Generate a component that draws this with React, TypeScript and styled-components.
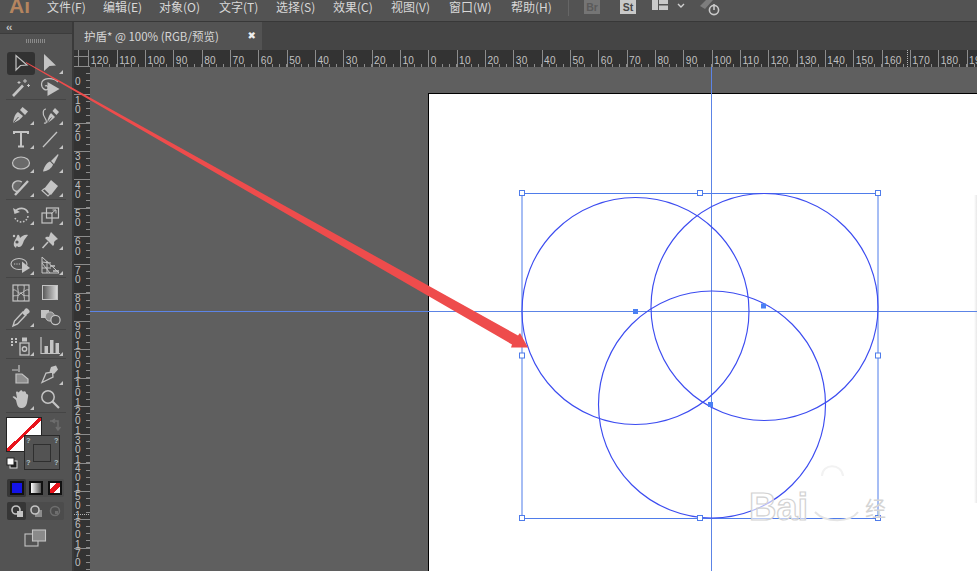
import React from "react";
import styled, { createGlobalStyle } from "styled-components";

const GlobalStyle = createGlobalStyle`
  html, body {
    margin: 0;
    padding: 0;
    width: 100%;
    height: 100%;
    overflow: hidden;
    background: #535353;
  }
`;

const MENUS = [
  { label: "文件(F)", w: 56 },
  { label: "编辑(E)", w: 56 },
  { label: "对象(O)", w: 60 },
  { label: "文字(T)", w: 57 },
  { label: "选择(S)", w: 57 },
  { label: "效果(C)", w: 58 },
  { label: "视图(V)", w: 58 },
  { label: "窗口(W)", w: 62 },
  { label: "帮助(H)", w: 56 },
];

const RULER_UNIT = 28.33;
const H_LABELS = [
  120, 110, 100, 90, 80, 70, 60, 50, 40, 30, 20, 10, 0, 10, 20, 30, 40, 50, 60, 70, 80, 90, 100,
  110, 120, 130, 140, 150, 160, 170, 180, 190,
];
const V_LABELS = [0, 10, 20, 30, 40, 50, 60, 70, 80, 90, 100, 110, 120, 130, 140, 150, 160, 170];

const Page = styled.div`
  position: relative;
  width: 977px;
  height: 571px;
  overflow: hidden;
  display: flex;
  flex-direction: column;
  background: #535353;
  font-family: "Noto Sans CJK SC", "Liberation Sans", sans-serif;
`;

const MenuBar = styled.div`
  height: 21px;
  flex: none;
  display: flex;
  align-items: flex-start;
  background: #535353;
  border-bottom: 1px solid #383838;
`;

const Logo = styled.div`
  width: 47px;
  padding-left: 9px;
  box-sizing: border-box;
  height: 13px;
  overflow: hidden;
  font: bold 21px/12px "Liberation Sans", sans-serif;
  color: #b5855f;
`;

const MenuItem = styled.div<{ $w: number }>`
  width: ${(p) => p.$w}px;
  flex: none;
  font-size: 12px;
  line-height: 13px;
  color: #d8d8d8;
  white-space: nowrap;
`;

const MenuDivider = styled.div`
  width: 1px;
  height: 16px;
  background: #666;
  margin: 0 15px 0 1px;
`;

const AppBadge = styled.div<{ $on?: boolean }>`
  width: 16px;
  height: 14px;
  margin-right: 20px;
  text-align: center;
  font: bold 10.5px/14px "Liberation Sans", sans-serif;
  background: ${(p) => (p.$on ? "#c9c9c9" : "#757575")};
  color: ${(p) => (p.$on ? "#474747" : "#5a5a5a")};
`;

const WorkspaceIcon = styled.svg`
  flex: none;
  display: block;
  margin-left: -4px;
`;

const PowerIcon = styled.svg`
  flex: none;
  display: block;
  margin-left: 12px;
`;

const Body = styled.div`
  flex: 1;
  min-height: 0;
  display: flex;
`;

const ToolPanel = styled.div`
  width: 72px;
  flex: none;
  display: flex;
  flex-direction: column;
  background: #535353;
  border-right: 2px solid #3a3a3a;
`;

const PanelHead = styled.div`
  height: 11px;
  flex: none;
  background: #464646;
  border-bottom: 1px solid #3c3c3c;
  color: #c4c4c4;
  font: bold 11px/10px "Liberation Sans", sans-serif;
  padding-left: 6px;
  letter-spacing: -1px;
`;

const Grip = styled.div`
  width: 20px;
  height: 4px;
  flex: none;
  margin: 5px 0 8px 26px;
  background: repeating-linear-gradient(90deg, #8a8a8a 0 1px, transparent 1px 2px);
`;

const ToolGroup = styled.div`
  margin: 0 6px 2.5px;
  border-bottom: 1px solid #454545;
`;

const ToolRow = styled.div<{ $h: number }>`
  display: flex;
  height: ${(p) => p.$h}px;
  margin-left: 1px;
  align-items: center;
`;

const ToolCell = styled.div<{ $active?: boolean; $more?: boolean }>`
  position: relative;
  width: 28px;
  height: 23px;
  margin-right: 2px;
  display: flex;
  align-items: center;
  justify-content: center;
  border-radius: 3px;
  color: #c4c4c4;
  background: ${(p) => (p.$active ? "#323232" : "transparent")};

  ${(p) =>
    p.$more &&
    `&::after {
      content: "";
      position: absolute;
      right: 1px;
      bottom: 1px;
      border-style: solid;
      border-width: 0 0 4px 4px;
      border-color: transparent transparent #c4c4c4 transparent;
    }`}
`;

const ColorArea = styled.div`
  position: relative;
  height: 57px;
  margin-top: 2px;
  flex: none;
`;

const FillSwatch = styled.div`
  position: absolute;
  left: 6px;
  top: 0;
  width: 34px;
  height: 33px;
  border: 1px solid #222;
  background: linear-gradient(
    to bottom right,
    #fff 0 calc(50% - 1.6px),
    #e8141c calc(50% - 1.6px) calc(50% + 1.6px),
    #fff calc(50% + 1.6px)
  );
`;

const StrokeSwatch = styled.div`
  position: absolute;
  left: 24px;
  top: 18px;
  width: 34px;
  height: 33px;
  border: 1px solid #2a2a2a;
  background: #535353;
  display: flex;
  align-items: center;
  justify-content: center;

  &::after {
    content: "";
    width: 16px;
    height: 16px;
    border: 1px solid #2f2f2f;
  }
`;

const Unknown = styled.span<{ $x: number; $y: number }>`
  position: absolute;
  left: ${(p) => p.$x}px;
  top: ${(p) => p.$y}px;
  font: bold 7.5px/8px "Liberation Sans", sans-serif;
  color: #a9c0c8;
`;

const SwapIcon = styled.svg`
  position: absolute;
  left: 50px;
  top: 1px;
`;

const DefaultIcon = styled.svg`
  position: absolute;
  left: 6px;
  top: 40px;
`;

const ModeRow = styled.div`
  margin: 5px 0 0 7px;
  width: 57px;
  height: 18px;
  flex: none;
  display: flex;
  border-radius: 2px;
  background: #4c4c4c;
  box-sizing: border-box;
`;

const ModeButton = styled.div<{ $active?: boolean }>`
  width: 19px;
  display: flex;
  align-items: center;
  justify-content: center;
  border-radius: 2px;
  background: ${(p) => (p.$active ? "#363636" : "transparent")};
`;

const ColorChip = styled.div<{ $kind: "color" | "gradient" | "none" }>`
  width: 10px;
  height: 10px;
  border: 2px solid #111;
  background: ${(p) =>
    p.$kind === "color"
      ? "#1414e6"
      : p.$kind === "gradient"
        ? "linear-gradient(90deg, #fff, #555)"
        : "linear-gradient(to bottom right, #fff 0 34%, #e8141c 34% 66%, #fff 66%)"};
`;

const ScreenMode = styled.div`
  display: flex;
  justify-content: center;
  margin-top: 9px;
  padding-right: 1px;
  color: #c4c4c4;
`;

const DocArea = styled.div`
  flex: 1;
  min-width: 0;
  display: flex;
  flex-direction: column;
`;

const TabBar = styled.div`
  height: 28px;
  flex: none;
  display: flex;
  background: #454545;
`;

const Tab = styled.div`
  width: 188px;
  box-sizing: border-box;
  display: flex;
  align-items: center;
  justify-content: space-between;
  padding: 0 6px 0 10px;
  background: #535353;
  color: #d6d6d6;
  font-size: 11.5px;
  white-space: nowrap;
`;

const TabClose = styled.span`
  font: bold 10px/12px "Liberation Sans", "DejaVu Sans", sans-serif;
  color: #eee;
`;

const RulerTop = styled.div`
  height: 17px;
  flex: none;
  display: flex;
  background: #333;
  overflow: hidden;
`;

const RulerCorner = styled.div`
  width: 14.33px;
  flex: none;
  box-sizing: border-box;
  background:
    linear-gradient(#8a8a8a, #8a8a8a) 4px 0 / 1px 100% no-repeat,
    linear-gradient(#8a8a8a, #8a8a8a) 0 6px / 100% 1px no-repeat;
`;

const HCell = styled.div`
  width: ${RULER_UNIT}px;
  flex: none;
  box-sizing: border-box;
  border-left: 1px solid #8c8c8c;
  padding: 4px 0 0 1.5px;
  font: 10px/13px "Liberation Sans", sans-serif;
  letter-spacing: 0.35px;
  color: #c2c2c2;
  background: repeating-linear-gradient(90deg, transparent 0 6px, #8c8c8c 6px 7.08px) 0 100% / 100% 3px
    no-repeat;
`;

const Workspace = styled.div`
  flex: 1;
  min-height: 0;
  display: flex;
`;

const RulerLeft = styled.div`
  width: 16px;
  flex: none;
  margin-top: -1px;
  background: #333;
  overflow: hidden;
`;

const VCell = styled.div`
  height: ${RULER_UNIT}px;
  box-sizing: border-box;
  border-top: 1px solid #8c8c8c;
  padding: 0 0 8.5px 1px;
  display: flex;
  flex-direction: column;
  justify-content: flex-end;
  font: 10px/9.3px "Liberation Sans", sans-serif;
  color: #c2c2c2;
  background: repeating-linear-gradient(180deg, transparent 0 6px, #8c8c8c 6px 7.08px) 100% 0 / 4px 100%
    no-repeat;
`;

const Canvas = styled.div`
  flex: 1;
  min-width: 0;
  position: relative;
  background: #5f5f5f;
  overflow: hidden;
`;

const Artboard = styled.div`
  margin: 26px 0 0 338px;
  height: 600px;
  background: #fff;
  border-top: 1.5px solid #000;
  border-left: 1.5px solid #000;
  box-sizing: border-box;
`;

const SidePanelEdge = styled.div`
  position: absolute;
  right: 0;
  bottom: 68px;
  width: 3px;
  height: 308px;
  background: linear-gradient(90deg, #fff, #e8e8e8);
`;

const Overlay = styled.svg`
  position: absolute;
  left: 0;
  top: 0;
  pointer-events: none;
`;

type Tool = { icon: React.ReactNode; more?: boolean; active?: boolean };

const Ico = ({ children }: { children: React.ReactNode }) => (
  <svg width="22" height="22" viewBox="0 0 22 22" fill="none" stroke="currentColor" strokeWidth="1.4">
    {children}
  </svg>
);

const F = "currentColor";
const BG = "#535353";

const groups: { h: number; rows: Tool[][] }[] = [
  {
    h: 24,
    rows: [
      [
        {
          active: true,
          icon: (
            <Ico>
              <path d="M6 3.5 V18 L10.5 13.5 L17 13 Z" strokeWidth="1.2" />
            </Ico>
          ),
        },
        {
          more: true,
          icon: (
            <Ico>
              <path d="M5 2 V19 L10.5 14 L17 13.5 Z" fill={F} stroke="none" />
            </Ico>
          ),
        },
      ],
      [
        {
          icon: (
            <Ico>
              <path d="M3 20 L13 9.5" strokeWidth="2.6" />
              <path d="M15 3 V7 M13 5 H17 M18.5 8 V11 M17 9.5 H20 M9 5 V8 M7.5 6.5 H10.5" strokeWidth="1" />
            </Ico>
          ),
        },
        {
          icon: (
            <Ico>
              <path d="M19 6 C14 1 3 1.5 2.5 8 C2.5 13 7 15 9 13 C10 11 8 9 6 10" strokeWidth="1.2" />
              <path d="M8.5 6 V20 L20.5 13 Z" fill={F} stroke="none" />
            </Ico>
          ),
        },
      ],
    ],
  },
  {
    h: 24,
    rows: [
      [
        {
          more: true,
          icon: (
            <Ico>
              <path d="M3 19 C4 13 5 10 8 8 L13 12 C11 15 8 17 3 19 Z" fill={F} stroke="none" />
              <path d="M10 6 L12.5 3 L18 7.5 L15 11 Z" fill={F} stroke="none" />
              <path d="M3.5 18.5 L8.5 13" stroke={BG} strokeWidth="1" />
            </Ico>
          ),
        },
        {
          more: true,
          icon: (
            <Ico>
              <path d="M5 19 C8 20 8 17 6 14 C3 10 4 5 7 5" strokeWidth="1.2" />
              <path d="M8 19 C9 14 10 11 12 9 L16 13 C14 15 12 17 8 19 Z" fill={F} stroke="none" />
              <path d="M13.5 7 L16 4 L20 8 L17.5 11 Z" fill={F} stroke="none" />
              <path d="M8.5 18.5 L12.5 13.5" stroke={BG} strokeWidth="1" />
            </Ico>
          ),
        },
      ],
      [
        {
          more: true,
          icon: (
            <Ico>
              <path d="M4 6 V4 H18 V6 M11 4 V18 M8 18.5 H14" strokeWidth="2" />
            </Ico>
          ),
        },
        {
          more: true,
          icon: (
            <Ico>
              <path d="M4 19 L18 4" strokeWidth="1.3" />
            </Ico>
          ),
        },
      ],
      [
        {
          more: true,
          icon: (
            <Ico>
              <ellipse cx="11" cy="11" rx="8.5" ry="6" fill="#6a6a6a" strokeWidth="1.2" />
            </Ico>
          ),
        },
        {
          more: true,
          icon: (
            <Ico>
              <path d="M12 9 L19 2 L19.5 3 L15 12 Z" fill={F} stroke="none" />
              <path d="M4 19.5 C5 15 8 10 11 9.5 L14 12.5 C13 16 9 19 4 19.5 Z" fill={F} stroke="none" />
            </Ico>
          ),
        },
      ],
      [
        {
          more: true,
          icon: (
            <Ico>
              <path d="M12 6 C6 3 2 7 2.5 11 C3 15 7 16 8 15" fill="#6a6a6a" strokeWidth="1.3" />
              <path d="M5 19 L18 5" strokeWidth="2.4" />
            </Ico>
          ),
        },
        {
          more: true,
          icon: (
            <Ico>
              <path d="M5 13 L12 4 L19 10 L12 19 Z" fill={F} stroke="none" />
              <path d="M3 14.5 L9 20 L11 18 L5.5 12.5 Z" fill={BG} strokeWidth="1.1" />
            </Ico>
          ),
        },
      ],
    ],
  },
  {
    h: 25,
    rows: [
      [
        {
          more: true,
          icon: (
            <Ico>
              <path d="M5 8 C8 3 16 3 18 9" strokeWidth="1.8" />
              <path d="M3 4 L4.5 10 L10 8" fill={F} stroke="none" />
              <path d="M18 12 C17 19 8 20 5 14" strokeDasharray="1.6 1.6" strokeWidth="1.6" />
            </Ico>
          ),
        },
        {
          more: true,
          icon: (
            <Ico>
              <rect x="3" y="9" width="10" height="10" strokeWidth="1.2" />
              <rect x="7.5" y="4" width="12" height="10" strokeWidth="1.2" />
              <path d="M12 10 L16.5 6 M13.5 6 H17 V9.5" strokeWidth="1" />
            </Ico>
          ),
        },
      ],
      [
        {
          more: true,
          icon: (
            <Ico>
              <path
                d="M4 17 C3 12 6 11 7 7 C8 4 10 7 10 9 C12 7 15 5 18 6 L15 10 C13 12 13 18 9 18 C7 18 7 15 6 19 Z"
                fill={F}
                stroke="none"
              />
              <circle cx="7" cy="13" r="1.6" fill={BG} stroke="none" />
              <circle cx="4" cy="7" r="1.2" fill={F} stroke="none" />
            </Ico>
          ),
        },
        {
          more: true,
          icon: (
            <Ico>
              <path
                d="M11 5 L12 3 L19 10 L17 11 L15 13 C15.5 15 15 16 14 17 L6 9 C7 8 8 7.5 10 8 Z"
                fill={F}
                stroke="none"
              />
              <path d="M9 13 L3.5 19" strokeWidth="1.6" />
            </Ico>
          ),
        },
      ],
      [
        {
          more: true,
          icon: (
            <Ico>
              <ellipse cx="9" cy="10" rx="8" ry="5.5" strokeWidth="1.1" />
              <path d="M4 10 H11" strokeDasharray="1.2 1.2" strokeWidth="1" />
              <path d="M12 7.5 V19 L20 14 Z" fill={F} stroke="none" />
            </Ico>
          ),
        },
        {
          more: true,
          icon: (
            <Ico>
              <path d="M3 3 L3 19 H20 L16 15 L3 3 M3 9 L11 19 M8 7 L8 19 M3 14 H12 M3 8 L12 9" strokeWidth="1" />
              <path d="M11 12 H16 M14 17 H20" strokeWidth="1.6" />
            </Ico>
          ),
        },
      ],
    ],
  },
  {
    h: 24,
    rows: [
      [
        {
          icon: (
            <Ico>
              <rect x="3" y="3" width="16" height="16" strokeWidth="1.2" />
              <path
                d="M3 8 C7 7 7 12 11 11 S15 7 19 8 M3 14 C7 13 8 15 11 11 C14 15 15 13 19 14 M8 3 C7 7 9 9 8 13 C8 16 7 17 8 19 M14 3 C15 7 13 9 14 13 C14 16 15 17 14 19"
                strokeWidth="1"
              />
            </Ico>
          ),
        },
        {
          icon: (
            <svg width="22" height="22" viewBox="0 0 22 22">
              <defs>
                <linearGradient id="toolGrad">
                  <stop offset="0" stopColor="#555" />
                  <stop offset="1" stopColor="#ddd" />
                </linearGradient>
              </defs>
              <rect x="3.5" y="3.5" width="15" height="14" fill="url(#toolGrad)" stroke="#c4c4c4" />
            </svg>
          ),
        },
      ],
      [
        {
          more: true,
          icon: (
            <Ico>
              <path
                d="M13 5 L17 9 L15.5 10.5 L11.5 6.5 Z M15 3 C16 2 17 2 18.5 3.5 C20 5 20 6 19 7 L16 9 L13 6 Z"
                fill={F}
                stroke="none"
              />
              <path d="M12 7 L4.5 15 L3 20 L7.5 18 L15 10" strokeWidth="1.4" />
            </Ico>
          ),
        },
        {
          icon: (
            <Ico>
              <rect x="2" y="4" width="8" height="8" fill={F} stroke="none" />
              <circle cx="11" cy="10.5" r="4.6" fill="#8f8f8f" strokeWidth="1" />
              <circle cx="16.5" cy="14" r="4.6" fill={BG} strokeWidth="1.2" />
            </Ico>
          ),
        },
      ],
    ],
  },
  {
    h: 26,
    rows: [
      [
        {
          more: true,
          icon: (
            <Ico>
              <path d="M1 5 H3 M5 5 H7 M1 8 H3 M5 8 H7 M1 11 H3" strokeWidth="1.8" />
              <rect x="10" y="9" width="9" height="12" strokeWidth="1.3" />
              <rect x="12" y="3.5" width="5" height="4" fill={F} stroke="none" />
              <circle cx="14.5" cy="15" r="2.2" strokeWidth="1.4" />
            </Ico>
          ),
        },
        {
          more: true,
          icon: (
            <Ico>
              <path d="M2 3 V19.5 H21" strokeWidth="1.2" />
              <rect x="5.5" y="12" width="3.5" height="7" fill={F} stroke="none" />
              <rect x="11" y="6" width="3.5" height="13" fill={F} stroke="none" />
              <rect x="16.5" y="9" width="3.5" height="10" fill={F} stroke="none" />
            </Ico>
          ),
        },
      ],
    ],
  },
  {
    h: 25,
    rows: [
      [
        {
          icon: (
            <Ico>
              <path d="M9 2 V9 M2 7 H8" strokeWidth="1.2" />
              <path d="M6 11 H12 L18 16 V20 H6 Z" fill="#8f8f8f" strokeWidth="1.2" />
            </Ico>
          ),
        },
        {
          more: true,
          icon: (
            <Ico>
              <path d="M3 19.5 L7 10 L13.5 9 L14 14 Z" strokeWidth="1.3" />
              <path d="M12 4 L17 2.5 L19 6.5 L15 11 L10.5 8.5 Z" fill={F} stroke="none" />
            </Ico>
          ),
        },
      ],
      [
        {
          more: true,
          icon: (
            <Ico>
              <path
                d="M6 12 L2.5 9 C4 7 6 10 7 10 L6 4.5 C6 3 8 3 8.5 4.5 L10 3 C10.5 2 12 2 12.5 3.5 L14 3.5 C15 3 16 4 16 5 L16.5 6 C18 6 18.5 7 18 9 L17 15 C16 19 14 20 11 20 C8 20 7 17 6 12 Z"
                fill={F}
                stroke="none"
              />
            </Ico>
          ),
        },
        {
          icon: (
            <Ico>
              <circle cx="9" cy="9" r="6.2" strokeWidth="1.5" />
              <path d="M13.5 13.5 L20 20" strokeWidth="2.2" />
            </Ico>
          ),
        },
      ],
    ],
  },
];

const ToolIcon = ({ tool }: { tool: Tool }) => (
  <ToolCell $active={tool.active} $more={tool.more}>
    {tool.icon}
  </ToolCell>
);

export default function App() {
  return (
    <Page>
      <GlobalStyle />
      <MenuBar>
        <Logo>Ai</Logo>
        {MENUS.map((m) => (
          <MenuItem key={m.label} $w={m.w}>
            {m.label}
          </MenuItem>
        ))}
        <MenuDivider />
        <AppBadge>Br</AppBadge>
        <AppBadge $on>St</AppBadge>
        <WorkspaceIcon width="36" height="16" viewBox="0 0 36 16">
          <path d="M0 0 H6 V10 H0 Z M7 0 H16 V4 H7 Z M7 5.5 H16 V10 H7 Z" fill="#c9c9c9" />
          <path d="M26 4 L29 7 L32 4" fill="none" stroke="#d0d0d0" strokeWidth="1.4" />
        </WorkspaceIcon>
        <PowerIcon width="24" height="17" viewBox="0 0 24 17">
          <path d="M0 6 L6 0 L13 0 L5 9 Z" fill="#7d7d7d" />
          <circle cx="14" cy="10" r="4.6" fill="none" stroke="#c9c9c9" strokeWidth="1.6" />
          <path d="M14 4 V10" stroke="#c9c9c9" strokeWidth="1.6" />
        </PowerIcon>
      </MenuBar>
      <Body>
        <ToolPanel>
          <PanelHead>‹‹</PanelHead>
          <Grip />
          {groups.map((g, i) => (
            <ToolGroup key={i}>
              {g.rows.map((row, j) => (
                <ToolRow key={j} $h={g.h}>
                  {row.map((t, k) => (
                    <ToolIcon key={k} tool={t} />
                  ))}
                </ToolRow>
              ))}
            </ToolGroup>
          ))}
          <ColorArea>
            <FillSwatch />
            <StrokeSwatch />
            <Unknown $x={26} $y={20}>?</Unknown>
            <Unknown $x={54} $y={20}>?</Unknown>
            <Unknown $x={26} $y={42}>?</Unknown>
            <Unknown $x={54} $y={42}>?</Unknown>
            <SwapIcon width="12" height="14" viewBox="0 0 12 14" fill="none" stroke="#6e6e6e" strokeWidth="1.5">
              <path d="M0 3 H8 V12 M5 1 L2 3 L5 5 M6 9 L8 12 L10.5 9" />
            </SwapIcon>
            <DefaultIcon width="12" height="12" viewBox="0 0 12 12">
              <rect x="4" y="4" width="7" height="7" fill="#222" stroke="#ddd" />
              <rect x="1" y="1" width="7" height="7" fill="#fff" stroke="#222" />
            </DefaultIcon>
          </ColorArea>
          <ModeRow>
            <ModeButton $active>
              <ColorChip $kind="color" />
            </ModeButton>
            <ModeButton>
              <ColorChip $kind="gradient" />
            </ModeButton>
            <ModeButton>
              <ColorChip $kind="none" />
            </ModeButton>
          </ModeRow>
          <ModeRow>
            <ModeButton $active>
              <svg width="14" height="14" viewBox="0 0 14 14">
                <circle cx="6" cy="6" r="4" fill="none" stroke="#c4c4c4" strokeWidth="1.6" />
                <rect x="7" y="7" width="6" height="6" fill="#c4c4c4" />
              </svg>
            </ModeButton>
            <ModeButton>
              <svg width="14" height="14" viewBox="0 0 14 14">
                <rect x="6" y="6" width="7" height="7" fill="#8c8c8c" />
                <circle cx="6" cy="6" r="4" fill={BG} stroke="#c4c4c4" strokeWidth="1.6" />
              </svg>
            </ModeButton>
            <ModeButton>
              <svg width="14" height="14" viewBox="0 0 14 14">
                <circle cx="7" cy="7" r="4.5" fill="none" stroke="#6e6e6e" strokeWidth="1.5" />
                <rect x="7" y="7" width="3" height="3" fill="#6e6e6e" />
              </svg>
            </ModeButton>
          </ModeRow>
          <ScreenMode>
            <svg width="24" height="18" viewBox="0 0 24 18" fill="none" stroke="currentColor" strokeWidth="1.1">
              <rect x="1" y="5" width="13" height="12" />
              <rect x="8.5" y="1" width="13" height="11" fill="#8a8a8a" />
            </svg>
          </ScreenMode>
        </ToolPanel>
        <DocArea>
          <TabBar>
            <Tab>
              护盾* @ 100% (RGB/预览)
              <TabClose>✖</TabClose>
            </Tab>
          </TabBar>
          <RulerTop>
            <RulerCorner />
            {H_LABELS.map((n, i) => (
              <HCell key={i}>{n}</HCell>
            ))}
          </RulerTop>
          <Workspace>
            <RulerLeft>
              {V_LABELS.map((n) => (
                <VCell key={n}>
                  {String(n)
                    .split("")
                    .map((d, i) => (
                      <span key={i}>{d}</span>
                    ))}
                </VCell>
              ))}
            </RulerLeft>
            <Canvas>
              <Artboard />
              <SidePanelEdge />
            </Canvas>
          </Workspace>
        </DocArea>
      </Body>

      <Overlay width="977" height="571" viewBox="0 0 977 571">
        <path d="M907.5 50 V67 M74 514.5 H90" fill="none" stroke="#b5b5b5" strokeDasharray="1 1" />
        <g fill="none" stroke="#4f7cea" strokeWidth="1">
          <path d="M90 311.5 H977" stroke="#5c84e6" />
          <path d="M711.5 67 V571" stroke="#5c84e6" />
          <rect x="522" y="193.5" width="356" height="325" />
        </g>
        <g fill="none" stroke="#3c4cf0" strokeWidth="1.15">
          <circle cx="635.5" cy="311" r="113.5" />
          <circle cx="764.5" cy="307" r="113.5" />
          <circle cx="712" cy="404.5" r="113.5" />
        </g>
        <g fill="#4a80f4">
          <rect x="633" y="309" width="5" height="5" />
          <rect x="761" y="303.5" width="5" height="5" />
          <rect x="708" y="402" width="5" height="5" />
        </g>
        <g fill="#fff" stroke="#4f7cea">
          <rect x="519.5" y="190.5" width="5" height="5" />
          <rect x="697.5" y="190.5" width="5" height="5" />
          <rect x="875.5" y="190.5" width="5" height="5" />
          <rect x="519.5" y="353" width="5" height="5" />
          <rect x="875.5" y="353" width="5" height="5" />
          <rect x="519.5" y="515.5" width="5" height="5" />
          <rect x="697.5" y="515.5" width="5" height="5" />
          <rect x="875.5" y="515.5" width="5" height="5" />
        </g>
        <path d="M26 62 L518 335.5 L520 333 L528 347.5 L511 347.5 L512 344.5 L26 63 Z" fill="#ee4c4c" />
        <ellipse cx="836" cy="490" rx="28" ry="24" fill="#fff" />
        <path d="M815 512 C825 523 850 523 858 512" fill="none" stroke="#e4e4e4" strokeWidth="2" />
        <path d="M822 476 C822 463 842 463 843 476" fill="none" stroke="#f2f2f2" strokeWidth="2" />
        <text
          x="749"
          y="520"
          fontFamily="Liberation Sans, sans-serif"
          fontWeight="bold"
          fontSize="38"
          fill="#fff"
          fillOpacity="0.6"
          stroke="#d2d2d2"
          strokeWidth="1.2"
        >
          Bai
        </text>
        <text x="865" y="516" fontFamily="Noto Sans CJK SC, sans-serif" fontSize="21" fill="#d4d4d4">
          经
        </text>
      </Overlay>
    </Page>
  );
}
